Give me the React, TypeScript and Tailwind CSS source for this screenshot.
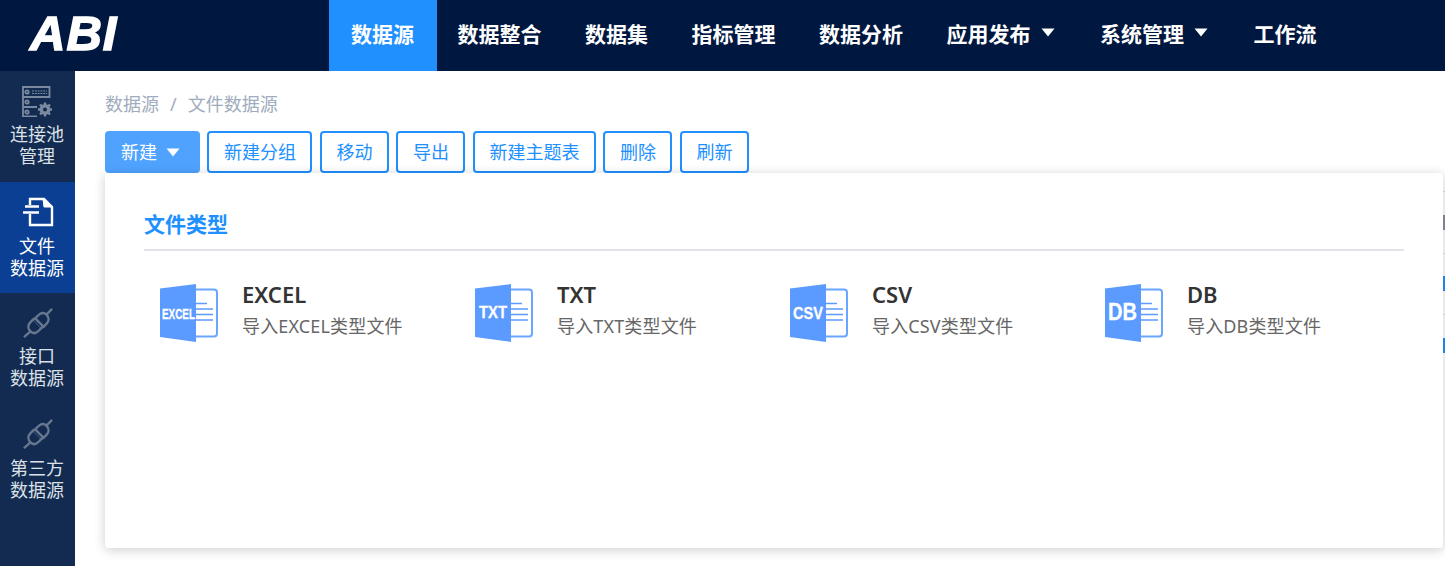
const CJK = "font-['Noto_Sans','Noto_Sans_CJK_SC',sans-serif]";

const navItems = [
  { label: '数据源', active: true },
  { label: '数据整合' },
  { label: '数据集' },
  { label: '指标管理' },
  { label: '数据分析' },
  { label: '应用发布', caret: true },
  { label: '系统管理', caret: true },
  { label: '工作流' },
];

const buttons = ['新建分组', '移动', '导出', '新建主题表', '删除', '刷新'];

const fileTypes = [
  { name: 'EXCEL', size: 15.5, x: 2, length: 33, y: 36 },
  { name: 'TXT', size: 16.5, x: 4, length: 28, y: 35 },
  { name: 'CSV', size: 17, x: 3, length: 30, y: 35.5 },
  { name: 'DB', size: 23, x: 3, length: 29, y: 37 },
];

function Caret({ className }: { className: string }) {
  return (
    <svg viewBox="0 0 14 9" className={className}>
      <path d="M0.5 0.5h13L7 8.5z" fill="currentColor" />
    </svg>
  );
}

function ServerIcon() {
  return (
    <svg width="32" height="32" viewBox="0 0 32 32" fill="none" stroke="#7b8aa1" strokeWidth="1.800">
      <path d="M1 2h26.500v10H1z" />
      <path d="M1 12v10h14M1 22v9.500h14" />
      <circle cx="5" cy="7" r="1.700" />
      <circle cx="5" cy="17" r="1.700" />
      <circle cx="5" cy="27" r="1.700" />
      <path d="M10 6h15M10 8.500h15" strokeWidth="1.200" strokeDasharray="2 0.800" />
      <circle cx="23" cy="24.500" r="3.800" strokeWidth="3.200" />
      <path d="M23 17.500v14M16 24.500h14M18 19.500l10 10M28 19.500l-10 10" strokeWidth="2.400" />
      <circle cx="23" cy="24.500" r="2" fill="#132b50" stroke="none" />
    </svg>
  );
}

function FileIcon() {
  return (
    <svg width="32" height="30" viewBox="0 0 32 30" fill="none" stroke="#ffffff" strokeWidth="2.400">
      <path d="M8 8V2h14l8 8v18H8V17" />
      <path d="M21 2l1 8h8l-9-8z" fill="#ffffff" strokeWidth="1" />
      <path d="M3 9.500h14M1 15.500h16" strokeWidth="2.400" />
    </svg>
  );
}

function PlugIcon() {
  return (
    <svg width="30" height="30" viewBox="0 0 32 32" fill="none" stroke="#67778f" strokeWidth="2.600">
      <path d="M1 31l7-6" />
      <path d="M31 1l-6 6" />
      <path d="M8 25c-3-3-3-7 0-10l3-3 9 9-3 3c-3 3-6 4-9 1z" />
      <path d="M25 7c3 3 3 7 0 10l-3 3-9-9 3-3c3-3 6-4 9-1z" />
      <path d="M12 13l7 7" stroke="#132b50" strokeWidth="1.500" />
    </svg>
  );
}

function SideItem({
  lines,
  icon,
  active,
  low,
}: {
  lines: string[];
  icon: React.ReactNode;
  active?: boolean;
  low?: boolean;
}) {
  return (
    <div
      className={`h-[111px] flex flex-col items-center pt-[14px] ${
        active ? 'bg-[#0b3f93] text-white' : 'text-[#dce1e8]'
      }`}
    >
      <div className="h-[32px] flex items-center justify-center">{icon}</div>
      <div className={`${low ? 'mt-[7px]' : 'mt-[6px]'} text-[18px] leading-[22px] text-center -translate-x-[0.5px]`}>
        {lines.map((l) => (
          <div key={l}>{l}</div>
        ))}
      </div>
    </div>
  );
}

function FileTypeIcon({
  name,
  size,
  x,
  length,
  y,
}: {
  name: string;
  size: number;
  x: number;
  length: number;
  y: number;
}) {
  return (
    <svg width="58" height="60" viewBox="0 0 58 60" fill="none" className="shrink-0">
      <rect x="30" y="6.500" width="27" height="47" rx="3" stroke="#6aa6ff" strokeWidth="2" />
      <path d="M36 20.500h11M36 26h17M36 31.500h17M36 37h17" stroke="#5b9bff" strokeWidth="1.400" />
      <path d="M0 5.500L36 1v58L0 54z" fill="#5b9bff" />
      <text
        x={x}
        y={y}
        fill="#ffffff"
        stroke="#ffffff"
        strokeWidth="0.300"
        fontSize={size}
        fontWeight="700"
        fontFamily="'Liberation Sans', sans-serif"
        textLength={length}
        lengthAdjust="spacingAndGlyphs"
      >
        {name}
      </text>
    </svg>
  );
}

export default function App() {
  return (
    <div className={`w-[1445px] h-[566px] overflow-hidden flex flex-col bg-white ${CJK}`}>
      <header className="h-[71px] shrink-0 bg-[#001840] flex">
        <div className="w-[329px] pl-[30px] pb-[5px] flex items-center">
          <span className="text-[49px] leading-none font-bold italic text-white tracking-[1px] [-webkit-text-stroke:1.500px_white] font-['Liberation_Sans',sans-serif]">
            ABI
          </span>
        </div>
        {navItems.map((item, i) => (
          <div
            key={item.label}
            className={`h-full flex items-center pb-[2px] pl-[22px] text-[21px] font-bold text-white ${
              item.active ? 'bg-[#2090ff] pr-[22.500px]' : 'pr-[21.500px]'
            } ${i === 1 ? '-ml-[1px]' : ''}`}
          >
            {item.label}
            {item.caret && <Caret className="w-[14px] h-[9px] ml-[10px] mr-[2px] mb-[5px] text-white" />}
          </div>
        ))}
      </header>

      <div className="flex-1 flex min-h-0">
        <aside className="w-[75px] shrink-0 bg-[#132b50]">
          <SideItem lines={['连接池', '管理']} icon={<ServerIcon />} />
          <SideItem lines={['文件', '数据源']} icon={<FileIcon />} active low />
          <SideItem lines={['接口', '数据源']} icon={<PlugIcon />} />
          <SideItem lines={['第三方', '数据源']} icon={<PlugIcon />} low />
        </aside>

        <main className="flex-1 min-w-0 pl-[30px] pt-[20px] relative overflow-hidden">
          <div className="text-[18px] leading-[26px] text-[#a0acbd] flex">
            <span>数据源</span>
            <span className="mx-[11px]">/</span>
            <span>文件数据源</span>
          </div>

          <div className="mt-[14px] flex gap-[7.500px] relative">
            <button className="h-[42px] w-[94.900px] rounded-[4px] bg-[#4fa3ff] text-white text-[18px] flex items-center pl-[16px] gap-[9px]">
              新建
              <Caret className="w-[14px] h-[9px] text-white" />
            </button>
            {buttons.map((b) => (
              <button
                key={b}
                className="h-[42px] px-[14.500px] rounded-[4px] border-2 border-[#2090ff] bg-white text-[#2090ff] text-[18px] leading-none"
              >
                {b}
              </button>
            ))}

            {/* dropdown panel over the table */}
            <div className="absolute z-10 left-0 top-[42px] w-[1338px] h-[375px] bg-white rounded-[4px] shadow-[0_2px_12px_rgba(0,0,0,0.2)] pl-[39px] pr-[39px] pt-[34px]">
              <div className="text-[21px] leading-[34px] font-semibold text-[#2090ff] pb-[8px] border-b-2 border-[#e1e3e8]">
                文件类型
              </div>
              <div className="mt-[32px] pl-[16px] grid grid-cols-[315px_315px_315px_315px]">
                {fileTypes.map((t) => (
                  <div key={t.name} className="flex items-start gap-[24px]">
                    <FileTypeIcon {...t} />
                    <div className="-mt-[3px]">
                      <div className="text-[22px] leading-[28px] font-semibold text-[#333333]">{t.name}</div>
                      <div className="mt-[5px] text-[18px] leading-[26px] tracking-[0.150px] text-[#666666]">
                        导入{t.name}类型文件
                      </div>
                    </div>
                  </div>
                ))}
              </div>
            </div>
          </div>

          {/* table rows behind the panel, only a sliver shows at the right edge */}
          <div className="mt-[18px]">
            {['bg-[#8a8f99]', 'bg-[#2090ff]', 'bg-[#2090ff]'].map((c, i) => (
              <div key={i} className="h-[61.500px] border-t border-[#dcdfe6] flex items-center justify-end">
                <div className={`w-[2px] h-[15px] ${c}`} />
              </div>
            ))}
          </div>
        </main>
      </div>
    </div>
  );
}
